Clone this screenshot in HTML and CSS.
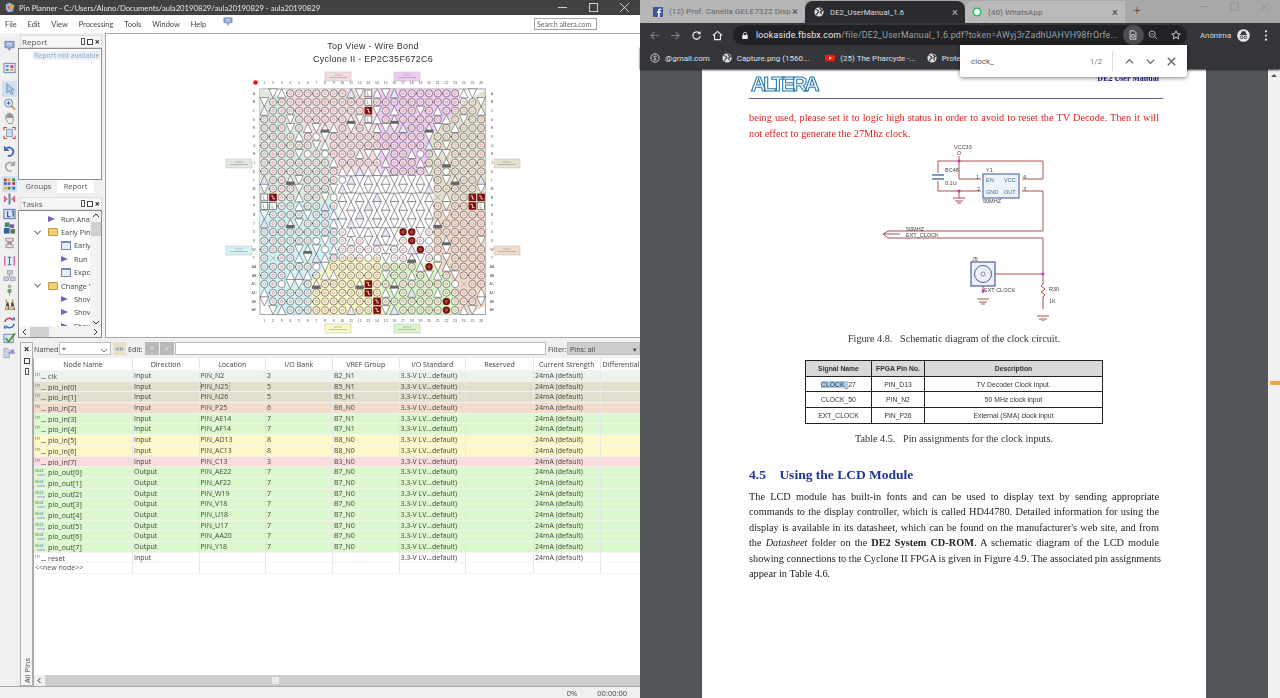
FILE: index.html
```html
<!DOCTYPE html>
<html lang="pt">
<head>
<meta charset="utf-8">
<title>Pin Planner</title>
<link rel="stylesheet" href="styles.css">
</head>
<body>
<div class="app">
  <header class="titlebar">
    <svg class="tb-logo" viewBox="0 0 14 14"><path d="M1 3l5-2 6 3-2 8-6 1-3-4z" fill="#9fb6dd"/><path d="M6 3l5 2-2 5-4-1z" fill="#d9a93b"/><path d="M3 5l3 1-1 4z" fill="#c44"/></svg>
    <span class="tb-text">Pin Planner - C:/Users/Aluno/Documents/aula20190829/aula20190829 - aula20190829</span>
    <div class="win-btns">
      <svg viewBox="0 0 10 10"><path d="M0 5h10" stroke="#ddd"/></svg>
      <svg viewBox="0 0 10 10"><rect x=".5" y=".5" width="9" height="9" fill="none" stroke="#ddd"/></svg>
      <svg viewBox="0 0 10 10"><path d="M0 0l10 10M10 0L0 10" stroke="#ddd"/></svg>
    </div>
  </header>
  <nav class="menubar">
    <span>File</span><span>Edit</span><span>View</span><span>Processing</span><span>Tools</span><span>Window</span><span>Help</span>
    <svg class="menu-ic" viewBox="0 0 12 12"><path d="M1 1h10v6H7l-1 3-2-3H1z" fill="#8ba4d0" stroke="#5f7aa8" stroke-width=".6"/><path d="M3 3h6M3 5h6" stroke="#fff" stroke-width=".7"/></svg>
    <div class="search">Search altera.com</div>
  </nav>
  <div class="main">
    <aside class="rail">
      <div class="rgroup rg-first"><svg viewBox="0 0 14 14"><path d="M2 2h10v7H8l-1 3-2-3H2z" fill="#8ba4d0" stroke="#5f7aa8" stroke-width=".7"/><path d="M4 4h6M4 6h6" stroke="#fff" stroke-width=".8"/></svg></div>
      <div class="rgroup rg-wide"><svg viewBox="0 0 14 14"><rect x="1" y="2" width="12" height="10" fill="#dbe6f5" stroke="#6d86b3"/><rect x="3" y="4" width="3" height="2" fill="#5b7fc2"/><rect x="8" y="4" width="3" height="3" fill="#d13a7a"/><rect x="3" y="8" width="3" height="2" fill="#5aa05a"/><rect x="8" y="8" width="3" height="2" fill="#e0a030"/></svg></div>
      <div class="rgroup rg-after">
        <svg class="sel" viewBox="0 0 14 14"><path d="M4 1v10l3-2 2 4 2-1-2-4h3z" fill="#b9c9e6" stroke="#6a7da6" stroke-width=".8"/></svg>
        <svg viewBox="0 0 14 14"><circle cx="6" cy="6" r="4.300" fill="#dfe9f7" stroke="#6b84ad"/><path d="M4 6h4M6 4v4" stroke="#3b5c9b"/><path d="M9 9l4 4" stroke="#b8922f" stroke-width="1.600"/></svg>
        <svg viewBox="0 0 14 14"><path d="M3 8V4h1v3M5 7V2h1v5M7 7V2h1v5M9 7V3h1v4M3 8l3 5h4l1-3V5h-1" fill="#eee" stroke="#777" stroke-width=".8"/></svg>
        <svg viewBox="0 0 14 14"><path d="M1 4V1h3M10 1h3v3M13 10v3h-3M4 13H1v-3" fill="none" stroke="#d43a2a" stroke-width="1.100"/><rect x="4" y="3" width="6" height="8" fill="#cfdcef" stroke="#6b84ad" stroke-width=".8"/></svg>
      </div>
      <div class="rgroup rg-mid">
        <svg viewBox="0 0 14 14"><path d="M3 5a4.500 4.500 0 1 1 2 7" fill="none" stroke="#3f6db5" stroke-width="2"/><path d="M1 1v6h6z" fill="#3f6db5"/></svg>
        <svg viewBox="0 0 14 14"><path d="M11 5a4.500 4.500 0 1 0-2 7" fill="none" stroke="#a9a9a9" stroke-width="1.800"/><path d="M13 1v6H7z" fill="#a9a9a9"/></svg>
      </div>
      <div class="rgroup rg-mid">
        <svg class="sel" viewBox="0 0 14 14"><rect x="1" y="1" width="3" height="3" fill="#d13a3a"/><rect x="5" y="1" width="3" height="3" fill="#e7b02c"/><rect x="10" y="1" width="3" height="3" fill="#3f8f3f"/><rect x="1" y="5" width="3" height="3" fill="#3f6db5"/><rect x="5" y="5" width="3" height="3" fill="#9a4db5"/><rect x="10" y="5" width="3" height="3" fill="#d13a3a"/><rect x="1" y="10" width="3" height="3" fill="#e7b02c"/><rect x="5" y="10" width="3" height="3" fill="#3f8f3f"/><rect x="10" y="10" width="3" height="3" fill="#3f6db5"/></svg>
        <svg viewBox="0 0 14 14"><path d="M1 3l4 4-4 4zM13 3L9 7l4 4z" fill="#c9559f"/><path d="M6 1h2v12H6z" fill="#4b7bc4"/><path d="M1 7h12" stroke="#e7b02c"/></svg>
        <svg viewBox="0 0 14 14"><rect x="1" y="2" width="12" height="10" fill="#d7e3f3" stroke="#4f6da3"/><path d="M5 4v6h3M9 4h2v6" fill="none" stroke="#2d4f8f" stroke-width="1.200"/></svg>
        <svg viewBox="0 0 14 14"><rect x="2" y="1" width="5" height="5" fill="#3f8f6f"/><rect x="7" y="3" width="5" height="4" fill="#7f5fa8"/><rect x="1" y="7" width="6" height="6" fill="#2f5f9f"/><rect x="8" y="8" width="5" height="5" fill="#4f7f4f"/></svg>
        <svg viewBox="0 0 14 14"><path d="M3 2h8v3H8v4h3v3H3V9h3V5H3z" fill="#e8e8e8" stroke="#777" stroke-width=".8"/><path d="M4 7h6" stroke="#c33"/></svg>
      </div>
      <div class="rgroup rg-mid">
        <svg viewBox="0 0 14 14"><path d="M2 2v10M12 2v10" stroke="#d43a9a" stroke-width="1.200"/><path d="M5 3h4M7 3v8M5 11h4" stroke="#3f6db5" stroke-width="1.200"/></svg>
        <svg viewBox="0 0 14 14"><rect x="5" y="1" width="5" height="4" fill="#c5ccd6" stroke="#8994a3" stroke-width=".7"/><rect x="1" y="8" width="5" height="4" fill="#c5ccd6" stroke="#8994a3" stroke-width=".7"/><rect x="8" y="8" width="5" height="4" fill="#c5ccd6" stroke="#8994a3" stroke-width=".7"/><path d="M7 5v3" stroke="#8994a3"/></svg>
        <svg viewBox="0 0 14 14"><circle cx="7" cy="3" r="2" fill="#9fb49f"/><circle cx="7" cy="8" r="2.400" fill="#6fa86f"/><path d="M7 10v3" stroke="#8a8a8a"/></svg>
        <svg viewBox="0 0 14 14"><path d="M2 12l2-8h2l1 8zM8 12l1-8h2l2 8z" fill="#4d4d4d"/><path d="M3 4l1-3M11 4l-1-3" stroke="#c69a3a" stroke-width="1.500"/><circle cx="4" cy="10" r="2" fill="#e6c36a"/><circle cx="10" cy="10" r="2" fill="#e6c36a"/></svg>
      </div>
      <div class="rgroup rg-mid">
        <svg viewBox="0 0 14 14"><path d="M2 6a5 5 0 0 1 9-2" fill="none" stroke="#d43a3a" stroke-width="1.600"/><path d="M12 8a5 5 0 0 1-9 2" fill="none" stroke="#3f6db5" stroke-width="1.600"/><path d="M10 1h3v4zM4 13H1V9z" fill="#3f6db5"/></svg>
        <svg viewBox="0 0 14 14"><rect x="1" y="3" width="10" height="9" fill="#d7e3f3" stroke="#6b84ad"/><path d="M3 7l3 4 7-9" fill="none" stroke="#3f9a3f" stroke-width="2"/></svg>
        <svg viewBox="0 0 14 14"><path d="M1 2h4l2 2v8H1z" fill="#c8d3e4" stroke="#7c8dab" stroke-width=".6"/><path d="M6 7h7" stroke="#6c5fae"/><circle cx="10" cy="5" r="2" fill="#a38ad0"/></svg>
      </div>
    </aside>
    <div class="workspace">
      <div class="upper">
        <div class="side">
          <div class="dock-head"><span>Report</span><span class="dock-ic"><i class="pin"></i><i class="float"></i><b>×</b></span></div>
          <div class="report-body"><div class="na">Report not available</div></div>
          <div class="tabs"><span class="tab">Groups</span><span class="tab tab-on">Report</span></div>
          <div class="dock-head dock-tasks"><span>Tasks</span><span class="dock-ic"><i class="pin"></i><i class="float"></i><b>×</b></span></div>
          <div class="tree">
            <div class="tree-in">
              <div class="tree-rows">
                <div class="tn l2"><i class="play"></i><span>Run Anal</span></div>
                <div class="tn l1"><i class="chev"></i><i class="folder"></i><span>Early Pin</span></div>
                <div class="tn l3"><i class="winic"></i><span>Early</span></div>
                <div class="tn l3"><i class="play"></i><span>Run :</span></div>
                <div class="tn l3"><i class="winic"></i><span>Expo</span></div>
                <div class="tn l1"><i class="chev"></i><i class="folder"></i><span>Change V</span></div>
                <div class="tn l3"><i class="play"></i><span>Show</span></div>
                <div class="tn l3"><i class="play"></i><span>Show</span></div>
                <div class="tn l3"><i class="play"></i><span>Show</span></div>
              </div>
              <div class="vscroll"><svg viewBox="0 0 8 8"><path d="M1 5l3-3 3 3" fill="none" stroke="#333"/></svg><i class="thumb"></i><svg class="arrow-d" viewBox="0 0 8 8"><path d="M1 3l3 3 3-3" fill="none" stroke="#333"/></svg></div>
            </div>
            <div class="hscroll"><svg viewBox="0 0 8 8"><path d="M5 1L2 4l3 3" fill="none" stroke="#333"/></svg><i></i><svg viewBox="0 0 8 8"><path d="M3 1l3 3-3 3" fill="none" stroke="#333"/></svg></div>
          </div>
        </div>
        <section class="canvas">
          <div class="cv-title">Top View - Wire Bond</div>
          <div class="cv-title">Cyclone II - EP2C35F672C6</div>
          <div id="pins" class="pins"></div>
        </section>
      </div>
      <div class="lower">
        <div class="dock-strip">
          <div class="strip-ic"><b>×</b><i class="float"></i><i class="pin"></i></div>
          <div class="allpins">All Pins</div>
        </div>
        <div class="lower-main">
          <div class="lower-tools">
            <span class="lbl lbl-named">Named:</span><div class="combo">*<svg viewBox="0 0 8 8"><path d="M1 3l3 3 3-3" fill="none" stroke="#777"/></svg></div>
            <div class="tbtn tbtn-assign">«»</div>
            <span class="lbl lbl-edit">Edit:</span>
            <div class="tbtn tbtn-off">×</div><div class="tbtn tbtn-off tbtn-2">✓</div>
            <div class="edit-input"></div>
            <span class="lbl lbl-filter">Filter:</span><div class="filter">Pins: all<span>▾</span></div>
          </div>
          <div class="grid">
            <div class="row head"><div class="c-name">Node Name</div><div>Direction</div><div>Location</div><div>I/O Bank</div><div>VREF Group</div><div>I/O Standard</div><div>Reserved</div><div>Current Strength</div><div>Differential</div></div>
            <div class="row b2"><div class="n"><i class="in">in</i>clk</div><div>Input</div><div>PIN_N2</div><div>2</div><div>B2_N1</div><div>3.3-V LV...default)</div><div></div><div>24mA (default)</div><div></div></div>
            <div class="row b5"><div class="n"><i class="in">in</i>pio_in[0]</div><div>Input</div><div><span class="focus">PIN_N25</span></div><div>5</div><div>B5_N1</div><div>3.3-V LV...default)</div><div></div><div>24mA (default)</div><div></div></div>
            <div class="row b5"><div class="n"><i class="in">in</i>pio_in[1]</div><div>Input</div><div>PIN_N26</div><div>5</div><div>B5_N1</div><div>3.3-V LV...default)</div><div></div><div>24mA (default)</div><div></div></div>
            <div class="row b6"><div class="n"><i class="in">in</i>pio_in[2]</div><div>Input</div><div>PIN_P25</div><div>6</div><div>B6_N0</div><div>3.3-V LV...default)</div><div></div><div>24mA (default)</div><div></div></div>
            <div class="row b7"><div class="n"><i class="in">in</i>pio_in[3]</div><div>Input</div><div>PIN_AE14</div><div>7</div><div>B7_N1</div><div>3.3-V LV...default)</div><div></div><div>24mA (default)</div><div></div></div>
            <div class="row b7"><div class="n"><i class="in">in</i>pio_in[4]</div><div>Input</div><div>PIN_AF14</div><div>7</div><div>B7_N1</div><div>3.3-V LV...default)</div><div></div><div>24mA (default)</div><div></div></div>
            <div class="row b8"><div class="n"><i class="in">in</i>pio_in[5]</div><div>Input</div><div>PIN_AD13</div><div>8</div><div>B8_N0</div><div>3.3-V LV...default)</div><div></div><div>24mA (default)</div><div></div></div>
            <div class="row b8"><div class="n"><i class="in">in</i>pio_in[6]</div><div>Input</div><div>PIN_AC13</div><div>8</div><div>B8_N0</div><div>3.3-V LV...default)</div><div></div><div>24mA (default)</div><div></div></div>
            <div class="row b3"><div class="n"><i class="in">in</i>pio_in[7]</div><div>Input</div><div>PIN_C13</div><div>3</div><div>B3_N0</div><div>3.3-V LV...default)</div><div></div><div>24mA (default)</div><div></div></div>
            <div class="row b7"><div class="n"><i class="out">out</i>pio_out[0]</div><div>Output</div><div>PIN_AE22</div><div>7</div><div>B7_N0</div><div>3.3-V LV...default)</div><div></div><div>24mA (default)</div><div></div></div>
            <div class="row b7"><div class="n"><i class="out">out</i>pio_out[1]</div><div>Output</div><div>PIN_AF22</div><div>7</div><div>B7_N0</div><div>3.3-V LV...default)</div><div></div><div>24mA (default)</div><div></div></div>
            <div class="row b7"><div class="n"><i class="out">out</i>pio_out[2]</div><div>Output</div><div>PIN_W19</div><div>7</div><div>B7_N0</div><div>3.3-V LV...default)</div><div></div><div>24mA (default)</div><div></div></div>
            <div class="row b7"><div class="n"><i class="out">out</i>pio_out[3]</div><div>Output</div><div>PIN_V18</div><div>7</div><div>B7_N0</div><div>3.3-V LV...default)</div><div></div><div>24mA (default)</div><div></div></div>
            <div class="row b7"><div class="n"><i class="out">out</i>pio_out[4]</div><div>Output</div><div>PIN_U18</div><div>7</div><div>B7_N0</div><div>3.3-V LV...default)</div><div></div><div>24mA (default)</div><div></div></div>
            <div class="row b7"><div class="n"><i class="out">out</i>pio_out[5]</div><div>Output</div><div>PIN_U17</div><div>7</div><div>B7_N0</div><div>3.3-V LV...default)</div><div></div><div>24mA (default)</div><div></div></div>
            <div class="row b7"><div class="n"><i class="out">out</i>pio_out[6]</div><div>Output</div><div>PIN_AA20</div><div>7</div><div>B7_N0</div><div>3.3-V LV...default)</div><div></div><div>24mA (default)</div><div></div></div>
            <div class="row b7"><div class="n"><i class="out">out</i>pio_out[7]</div><div>Output</div><div>PIN_Y18</div><div>7</div><div>B7_N0</div><div>3.3-V LV...default)</div><div></div><div>24mA (default)</div><div></div></div>
            <div class="row"><div class="n"><i class="in">in</i>reset</div><div>Input</div><div></div><div></div><div></div><div>3.3-V LV...default)</div><div></div><div>24mA (default)</div><div></div></div>
            <div class="row"><div class="newnode">&lt;&lt;new node&gt;&gt;</div><div></div><div></div><div></div><div></div><div></div><div></div><div></div><div></div></div>
            <div class="grid-fill"></div>
            <div class="grid-hscroll"><svg viewBox="0 0 11 11"><path d="M6.500 3L4 5.500 6.500 8" fill="none" stroke="#333"/></svg><div class="gh-track"><i></i></div></div>
          </div>
        </div>
      </div>
    </div>
  </div>
  <footer class="status"><span class="st-pct">0%</span><span class="st-time">00:00:00</span></footer>
</div>

<div class="browser">
  <div class="tabstrip">
    <div class="btab btab-fb"><svg class="fav" viewBox="0 0 12 12"><rect width="12" height="12" rx="1" fill="#3b5998"/><path d="M8 12V7.300h1.500l.2-1.800H8V4.400c0-.5.200-.9.900-.9h.9V1.900H8.500C7 1.900 6.100 2.800 6.100 4.200v1.300H4.600v1.800h1.500V12z" fill="#fff"/></svg><span class="bt-label">(12) Prof. Canella GELE7322 Disp</span><span class="bt-x">×</span></div>
    <div class="btab btab-on"><svg class="fav" viewBox="0 0 12 12"><circle cx="6" cy="6" r="5.500" fill="#dee1e6"/><path d="M2 3l3 1 1 2-2 1-1 3M7 1l1 2 2 1-2 2 1 3" fill="none" stroke="#2a2b2e" stroke-width="1.300"/></svg><span class="bt-label">DE2_UserManual_1.6</span><span class="bt-x">×</span></div>
    <div class="btab btab-wa"><svg class="fav" viewBox="0 0 12 12"><circle cx="6" cy="6" r="5.500" fill="#25c463"/><circle cx="6" cy="6" r="3.500" fill="#fff"/></svg><span class="bt-label">(40) WhatsApp</span><span class="bt-x">×</span></div>
    <span class="plus">+</span>
    <div class="bwin">
      <svg viewBox="0 0 10 10"><path d="M0 5h10" stroke="#8f8f8f"/></svg>
      <svg viewBox="0 0 10 10"><rect x="1" y="1" width="8" height="8" fill="none" stroke="#8f8f8f"/></svg>
      <svg viewBox="0 0 10 10"><path d="M1 1l8 8M9 1L1 9" stroke="#8f8f8f"/></svg>
    </div>
  </div>
  <div class="toolbar">
    <svg class="nav nav-first" viewBox="0 0 12 12"><path d="M11 6H2M6 2L2 6l4 4" fill="none" stroke="#7c7f84" stroke-width="1.200"/></svg>
    <svg class="nav" viewBox="0 0 12 12"><path d="M1 6h9M6 2l4 4-4 4" fill="none" stroke="#7c7f84" stroke-width="1.200"/></svg>
    <svg class="nav" viewBox="0 0 12 12"><path d="M10 6.500A4 4 0 1 1 9 3.300" fill="none" stroke="#e8eaed" stroke-width="1.300"/><path d="M10.500 1v3.500H7z" fill="#e8eaed"/></svg>
    <svg class="nav" viewBox="0 0 12 12"><path d="M1 6l5-4.500L11 6M2.800 5v5.500h6.400V5" fill="none" stroke="#e8eaed" stroke-width="1.200"/></svg>
    <div class="omni">
      <svg class="lock" viewBox="0 0 10 10"><rect x="1.500" y="4.500" width="7" height="5" rx=".6" fill="#e8eaed"/><path d="M3 4.500V3a2 2 0 0 1 4 0v1.500" fill="none" stroke="#e8eaed"/></svg>
      <span class="url"><b>lookaside.fbsbx.com</b>/file/DE2_UserManual_1.6.pdf?token=AWyj3rZadhUAHVH98frOrfe...</span>
      <span class="om-pdf"><svg viewBox="0 0 12 12"><path d="M2.500 1h5l2 2v8h-7z" fill="none" stroke="#e8eaed"/><circle cx="6" cy="7" r="1.800" fill="none" stroke="#e8eaed"/></svg></span>
      <svg class="om-zoom" viewBox="0 0 12 12"><circle cx="5" cy="5" r="3.700" fill="none" stroke="#c6c9cd"/><path d="M3.300 5h3.400M8 8l3 3" stroke="#c6c9cd"/></svg>
      <svg class="om-star" viewBox="0 0 12 12"><path d="M6 1l1.500 3.400 3.700.3-2.800 2.400.8 3.600L6 8.800l-3.200 1.900.8-3.600L.8 4.700l3.700-.3z" fill="none" stroke="#e8eaed"/></svg>
    </div>
    <span class="anon">Anônima</span>
    <svg class="incog" viewBox="0 0 14 14"><circle cx="7" cy="7" r="6.800" fill="#e8eaed"/><path d="M3 6h8M4.500 6l.8-3h3.400l.8 3" fill="#35363a" stroke="#35363a"/><circle cx="5" cy="9" r="1.500" fill="none" stroke="#35363a"/><circle cx="9" cy="9" r="1.500" fill="none" stroke="#35363a"/></svg>
    <svg class="dots" viewBox="0 0 4 14"><circle cx="2" cy="2.500" r="1.200" fill="#e8eaed"/><circle cx="2" cy="7" r="1.200" fill="#e8eaed"/><circle cx="2" cy="11.500" r="1.200" fill="#e8eaed"/></svg>
  </div>
  <div class="bookmarks">
    <span class="bm bm-s"><svg viewBox="0 0 12 12"><circle cx="6" cy="6" r="5" fill="none" stroke="#e8eaed"/><path d="M8 4.300C7 3.300 4.500 3.500 4.500 5c0 1.600 3 1 3 2.300 0 1.300-2.300 1.400-3.500.4" fill="none" stroke="#e8eaed"/></svg>@gmail.com</span>
    <span class="bm bm-c"><svg viewBox="0 0 12 12"><circle cx="6" cy="6" r="5.500" fill="#dee1e6"/><path d="M2 3l3 1 1 2-2 1-1 3M7 1l1 2 2 1-2 2 1 3" fill="none" stroke="#35363a" stroke-width="1.300"/></svg>Capture.png (1560...</span>
    <span class="bm bm-y"><svg viewBox="0 0 12 12"><rect y="2" width="12" height="8" rx="2" fill="#e62117"/><path d="M5 4l3 2-3 2z" fill="#fff"/></svg>(25) The Pharcyde -...</span>
    <span class="bm"><svg viewBox="0 0 12 12"><circle cx="6" cy="6" r="5.500" fill="#dee1e6"/><path d="M2 3l3 1 1 2-2 1-1 3M7 1l1 2 2 1-2 2 1 3" fill="none" stroke="#35363a" stroke-width="1.300"/></svg>Prote</span>
  </div>
  <div class="viewer">
    <article class="page">
      <div class="pg-head"><span class="altera">ALTERA</span><span class="pg-run">DE2 User Manual</span></div>
      <div class="red">
        <span class="just">being used, please set it to logic high status in order to avoid to reset the TV Decode. Then it will</span>
        <span>not effect to generate the 27Mhz clock.</span>
      </div>
      <svg class="schem" viewBox="0 0 220 190">
        <g fill="none" stroke="#a8524f" stroke-width="1">
          <path d="M99 25v5M78 30h105v18h-21M78 30v12M78 50v10h43M99 30v18h22M99 60v7M162 60h21v40H40M40 107h143v36"/>
          <path d="M40 100H28l-5 3 5 4h12M23 103h17M183 143h-54M183 143v10l-2 2 4 3-4 3 4 3-2 2v12M123 155v7"/>
          <path d="M93 67h12M95 70h8M97 72h4M117 168h12M119 171h8M121 173h4M177 185h12M179 188h8M181 190h4"/>
        </g>
        <path d="M72 44h12M72 48h12" stroke="#5577aa" stroke-width="1.300"/>
        <rect x="123" y="43" width="36" height="24" fill="#eef2fa" stroke="#5a6ea8" stroke-width="1.200"/>
        <rect x="111" y="131" width="24" height="24" fill="#eef0f8" stroke="#4d5f99" stroke-width="1.200"/>
        <circle cx="123" cy="143" r="8.500" fill="none" stroke="#4d5f99"/>
        <circle cx="123" cy="143" r="2" fill="#fff" stroke="#4d5f99" stroke-width=".7"/>
        <circle cx="99" cy="22" r="1.700" fill="#fff" stroke="#a8524f" stroke-width=".7"/>
        <g fill="#d030c0"><circle cx="99" cy="30" r="1.500"/><circle cx="99" cy="60" r="1.500"/><circle cx="183" cy="143" r="1.500"/><circle cx="123" cy="160" r="1.500"/></g>
        <g class="sch-t">
          <text x="94" y="18">VCC33</text>
          <text x="85" y="41">BC48</text><text x="85" y="54">0.1U</text>
          <text x="126" y="41">Y1</text><text x="116" y="48">1</text><text x="117" y="60">2</text><text x="163" y="48">4</text><text x="163" y="60">3</text>
          <text class="blue" x="126" y="51">EN</text><text class="blue" x="144" y="51">VCC</text><text class="blue" x="126" y="63">GND</text><text class="blue" x="144" y="63">OUT</text>
          <text x="123" y="72">50MHZ</text><text x="46" y="100">50MHZ</text><text x="46" y="106">EXT_CLOCK</text>
          <text x="112" y="130">J5</text><text x="124" y="161">EXT CLOCK</text><text x="189" y="160">R30</text><text x="189" y="172">1K</text>
        </g>
      </svg>
      <div class="caption cap-fig">Figure 4.8.&nbsp;&nbsp; Schematic diagram of the clock circuit.</div>
      <div class="pdf-table">
        <div class="tr th"><div>Signal Name</div><div>FPGA Pin No.</div><div>Description</div></div>
        <div class="tr"><div><mark>CLOCK_</mark>27</div><div>PIN_D13</div><div>TV Decoder Clock Input.</div></div>
        <div class="tr"><div>CLOCK_50</div><div>PIN_N2</div><div>50 MHz clock input</div></div>
        <div class="tr"><div>EXT_CLOCK</div><div>PIN_P26</div><div>External (SMA) clock input</div></div>
      </div>
      <div class="caption cap-tab">Table 4.5.&nbsp;&nbsp; Pin assignments for the clock inputs.</div>
      <h2>4.5&nbsp;&nbsp;&nbsp; Using the LCD Module</h2>
      <div class="para">
        <span class="just">The LCD module has built-in fonts and can be used to display text by sending appropriate</span>
        <span class="just">commands to the display controller, which is called HD44780. Detailed information for using the</span>
        <span class="just">display is available in its datasheet, which can be found on the manufacturer's web site, and from</span>
        <span class="just">the <em>Datasheet</em> folder on the <b>DE2 System CD-ROM</b>. A schematic diagram of the LCD module</span>
        <span class="just">showing connections to the Cyclone II FPGA is given in Figure 4.9. The associated pin assignments</span>
        <span>appear in Table 4.6.</span>
      </div>
    </article>
    <div class="pdf-scroll"><span class="up"></span><i class="tick"></i></div>
  </div>
  <div class="findbar">
    <span class="f-q">clock_</span><span class="f-n">1/2</span><i class="f-sep"></i>
    <svg viewBox="0 0 12 12"><path d="M2 8l4-4 4 4" fill="none" stroke="#5f6368" stroke-width="1.400"/></svg>
    <svg viewBox="0 0 12 12"><path d="M2 4l4 4 4-4" fill="none" stroke="#5f6368" stroke-width="1.400"/></svg>
    <svg viewBox="0 0 12 12"><path d="M2 2l8 8M10 2l-8 8" fill="none" stroke="#5f6368" stroke-width="1.500"/></svg>
  </div>
</div>
<script src="script.js"></script>
</body>
</html>
```
FILE: styles.css
```css
* { box-sizing: border-box; }
html, body { margin: 0; height: 100%; }
body {
  width: 1280px; height: 698px; overflow: hidden; display: flex;
  font-family: "Open Sans", "Liberation Sans", sans-serif; font-size: 8px; color: #333;
  background: #f0f0f0;
}
svg { display: block; flex: none; }
i { display: block; font-style: normal; }

/* Quartus window */
.app { width: 640px; height: 698px; display: flex; flex-direction: column; background: #f0f0f0; filter: blur(.25px); }
.titlebar { height: 15px; background: #414141; color: #e6e6e6; display: flex; align-items: center; padding-left: 5px; font: 7.700px "Lato", sans-serif; }
.tb-logo { width: 11px; height: 11px; margin-right: 3px; }
.tb-text { flex: 1; white-space: nowrap; }
.win-btns { display: flex; gap: 22px; padding-right: 11px; }
.win-btns svg { width: 9px; height: 9px; }
.menubar { height: 18px; background: #fff; display: flex; align-items: center; padding-left: 5px; color: #444; font: 7.400px "Lato", sans-serif; }
.menubar > span { margin-right: 11px; }
.menu-ic { width: 10px; height: 10px; margin: -4px 0 0 6px; }
.search { margin-left: auto; margin-right: 43px; width: 63px; height: 12px; border: 1px solid #a5a5a5; background: #fff; color: #666; font-size: 7px; line-height: 10px; padding-left: 2px; white-space: nowrap; }
.main { flex: 1; display: flex; min-height: 0; }

.rail { width: 18px; flex: none; display: flex; flex-direction: column; align-items: center; padding-top: 6px; background: #f0f0f0; }
.rgroup { display: flex; flex-direction: column; align-items: center; gap: .7px; }
.rgroup svg { width: 13px; height: 14px; }
.rg-wide { margin-top: 8px; }
.rg-after { margin-top: 7px; }
.rg-mid { margin-top: 4.200px; }
.rgroup svg.sel { background: #cfe0f3; box-shadow: 0 0 0 1px #cfe0f3; }

.workspace { flex: 1; display: flex; flex-direction: column; min-width: 0; }
.upper { height: 305px; display: flex; gap: 3px; flex: none; }
.side { width: 84px; flex: none; display: flex; flex-direction: column; }
.dock-head { height: 13px; margin: 2px 0 0 2px; padding: 0 1px; display: flex; justify-content: space-between; align-items: center; background: #f7f7f7; border: 1px solid #dcdcdc; color: #555; font-size: 8px; }
.dock-ic { display: flex; gap: 2px; align-items: center; }
.dock-ic b { font-size: 9px; line-height: 8px; color: #222; }
.pin { width: 4px; height: 7px; border: 1px solid #555; background: #fff; }
.float { width: 6px; height: 6px; border: 1.500px solid #444; background: #fff; }
.report-body { height: 132px; border: 1px solid #8d8d8d; background: #fff; padding: 2px 1px 0 14px; }
.na { background: #e8f1fa; color: #93a4b8; font-size: 7px; line-height: 9px; white-space: nowrap; padding-left: 1px; }
.tabs { display: flex; height: 13px; padding-left: 2px; }
.tab { width: 37px; text-align: center; line-height: 12px; color: #555; font-size: 7.500px; }
.tab-on { background: #fff; }
.dock-tasks { margin-top: 4px; }
.tree { height: 128px; border: 1px solid #8d8d8d; background: #fff; display: flex; flex-direction: column; }
.tree-in { flex: 1; display: flex; min-height: 0; overflow: hidden; }
.tree-rows { flex: 1; overflow: hidden; margin-top: 1px; min-width: 0; }
.tn { height: 13.400px; display: flex; align-items: center; white-space: nowrap; color: #444; font-size: 7.400px; gap: 2px; overflow: hidden; }
.tn span { overflow: hidden; }
.l1 { padding-left: 16px; }
.l2 { padding-left: 29px; }
.l3 { padding-left: 42px; gap: 2px; }
.play { width: 0; height: 0; border-left: 7px solid #7a5fc0; border-top: 3.500px solid transparent; border-bottom: 3.500px solid transparent; margin-right: 4px; flex: none; }
.chev { width: 5px; height: 5px; border-right: 1px solid #555; border-bottom: 1px solid #555; transform: rotate(45deg) translate(-1px,-1px); margin-right: 6px; flex: none; }
.folder { width: 10px; height: 8px; background: #f2cf72; border: 1px solid #bd9a3f; border-radius: 1px; margin-right: 1px; flex: none; }
.winic { width: 10px; height: 9px; border: 1px solid #7289ba; border-top-width: 2px; background: #e8eef8; flex: none; margin-right: 1px; }
.vscroll { width: 11px; background: #f3f3f3; display: flex; flex-direction: column; align-items: center; flex: none; padding-top: 1px; }
.vscroll svg, .hscroll svg { width: 8px; height: 8px; }
.thumb { width: 10px; height: 14px; background: #d0d0d0; margin-top: 2px; }
.arrow-d { margin-top: auto; }
.hscroll { height: 11px; background: #f3f3f3; display: flex; align-items: center; padding: 0 2px; flex: none; }
.hscroll i { width: 19px; height: 10px; background: #d0d0d0; margin: 0 auto 0 1px; }

.canvas { flex: 1; background: #fff; border-top: 1px solid #a6a6a6; border-left: 1px solid #a6a6a6; border-bottom: 1px solid #a6a6a6; display: flex; flex-direction: column; align-items: center; padding-top: 6px; min-width: 0; color: #333; }
.cv-title { font-size: 9px; line-height: 13px; letter-spacing: .25px; font-family: "Liberation Sans", sans-serif; }
.pins { width: 300px; height: 265px; margin-top: 4px; flex: none; }
.pins svg { width: 300px; height: 265px; }
.pin-lbl { font: 3.500px "Liberation Sans", sans-serif; fill: #555; text-anchor: middle; }

.lower { flex: 1; display: flex; min-height: 0; margin-top: 4px; }
.dock-strip { width: 13px; margin-left: 2px; flex: none; border: 1px solid #b0b0b0; display: flex; flex-direction: column; justify-content: space-between; align-items: center; background: #f5f5f5; }
.strip-ic { display: flex; flex-direction: column; align-items: center; gap: 4.500px; margin-top: 2px; }
.strip-ic b { font-size: 10px; line-height: 8px; color: #222; }
.allpins { writing-mode: vertical-rl; transform: rotate(180deg); font-size: 7.500px; line-height: 10px; padding-top: 2px; color: #444; white-space: nowrap; }
.lower-main { flex: 1; min-width: 0; display: flex; flex-direction: column; }
.lower-tools { height: 13px; display: flex; align-items: center; flex: none; font-size: 7.200px; color: #444; white-space: nowrap; }
.lbl { flex: none; }
.lbl-named { width: 26px; padding-left: 1px; }
.lbl-edit { width: 19px; padding-left: 2px; }
.lbl-filter { width: 21px; padding-left: 2px; }
.combo { width: 52px; height: 13px; border: 1px solid #c0c0c0; background: #fff; display: flex; justify-content: space-between; align-items: flex-start; padding: 0 2px; line-height: 12px; flex: none; }
.combo svg { width: 8px; height: 8px; margin-top: 3px; }
.tbtn { width: 14px; height: 13px; text-align: center; line-height: 12px; font-size: 8px; flex: none; }
.tbtn-assign { width: 13px; background: #e6e0c4; color: #4a6fa8; margin-left: 2px; }
.tbtn-off { background: #b9b9b9; color: #eee; }
.tbtn-2 { margin-left: 1px; }
.edit-input { flex: 1; height: 13px; border: 1px solid #bdbdbd; background: #fff; margin-left: 1px; }
.filter { width: 73px; height: 13px; background: #cdcdcd; display: flex; justify-content: space-between; padding: 0 2px; line-height: 12px; border: 1px solid #bdbdbd; flex: none; }
.grid { flex: 1; display: flex; flex-direction: column; min-height: 0; min-width: 0; margin-top: 3px; background: #fff; border-left: 1px solid #a5a5a5; overflow: hidden; }
.row { display: grid; grid-template-columns: 99px 66.500px 66.500px 67px 66.500px 66.500px 68px 66.500px 60px; height: 10.700px; line-height: 10.500px; flex: none; border-bottom: 1px solid #f2f2f2; white-space: nowrap; font-size: 7px; color: #444; }
.row > div { padding-left: 1px; border-right: 1px solid #e6e6e6; overflow: hidden; }
.head { height: 13px; line-height: 13px; font-size: 7.100px; }
.head > div { text-align: center; padding-left: 0; }
.head > div:last-child { text-align: left; padding-left: 2px; }
.b2 { background: #ecf2ec; }
.b5 { background: #e2e0cc; }
.b6 { background: #f4dccc; }
.b7 { background: #dcf9cd; }
.b8 { background: #fcf8c7; }
.b3 { background: #fbdcdc; }
.row > .n { display: flex; padding-left: 1px; font-size: 7.200px; }
.in, .out { width: 13px; font-size: 5.500px; line-height: 6px; color: #5a78a8; flex: none; position: relative; }
.in::after, .out::after { content: ""; position: absolute; left: 6px; top: 7px; width: 5px; height: 1px; background: #999; }
.out::after { left: 2px; width: 8px; height: 2px; background: #c2c8cf; }
.focus { outline: 1px dashed #aaa; padding-right: 1px; }
.newnode { padding-left: 1px; color: #555; }
.grid-fill { flex: 1; }
.grid-hscroll { height: 11px; display: flex; align-items: center; background: #cdcdcd; flex: none; }
.grid-hscroll svg { width: 11px; height: 11px; background: #f0f0f0; }
.gh-track { flex: 1; display: flex; padding-left: 227px; }
.gh-track i { width: 7px; height: 7px; background: #eaeaea; }
.status { height: 12px; border-top: 1px solid #a8a8a8; flex: none; display: flex; justify-content: flex-end; align-items: center; padding-right: 13px; font-size: 7.500px; color: #444; background: #f0f0f0; }
.st-pct { margin-right: 20px; }

/* Browser */
.browser { width: 640px; height: 698px; display: flex; flex-direction: column; background: #35363a; position: relative; }
.tabstrip { height: 23px; background: #a8a8a8; display: flex; align-items: stretch; flex: none; }
.btab { display: flex; align-items: center; color: #5f6368; font-size: 8px; padding: 0 7px 0 13px; flex: none; font-family: "Roboto", sans-serif; letter-spacing: .1px; }
.btab-fb { width: 165px; background: #b6b6b6; border-radius: 0 0 6px 0; }
.btab-on { width: 160px; background: #2a2b2f; color: #dadce0; border-radius: 8px 8px 0 0; margin-top: 1px; padding-left: 9px; font-size: 7.700px; }
.btab-wa { width: 160px; background: #bababa; border-radius: 8px 0 0 0; margin-top: 1px; padding-left: 7px; }
.fav { width: 10px; height: 10px; margin-right: 6px; }
.bt-label { flex: 1; white-space: nowrap; overflow: hidden; }
.bt-x { font-size: 11px; color: #44474b; }
.btab-on .bt-x { color: #b0b3b8; }
.plus { color: #222; font-size: 14px; font-weight: 300; line-height: 22px; margin-left: 8px; }
.bwin { display: flex; gap: 21px; margin-left: auto; padding: 1px 11px 0 0; }
.bwin svg { width: 9px; height: 9px; margin-top: 1px; }
.toolbar { height: 24px; background: #35363a; display: flex; align-items: center; flex: none; }
.nav { width: 11px; height: 11px; margin-right: 10px; }
.nav-first { margin-left: 9px; }
.omni { width: 454px; height: 20px; border-radius: 10px; background: #202124; display: flex; align-items: center; padding-left: 8px; color: #9aa0a6; font-size: 8.800px; font-family: "Roboto", sans-serif; letter-spacing: .2px; white-space: nowrap; flex: none; }
.lock { width: 8px; height: 9px; margin-right: 7px; }
.url { flex: 1; overflow: hidden; }
.url b { color: #e8eaed; font-weight: 400; }
.om-pdf { width: 21px; height: 20px; background: #4d4e52; border-radius: 10px; display: flex; align-items: center; justify-content: center; margin-right: 4.500px; flex: none; }
.om-pdf svg { width: 10px; height: 10px; }
.om-zoom { width: 10px; height: 10px; margin-right: 13px; }
.om-star { width: 10px; height: 10px; margin-right: 6px; }
.anon { color: #d6d8db; font-size: 7.800px; margin-left: 13px; font-family: "Roboto", sans-serif; }
.incog { width: 13px; height: 13px; margin-left: 6px; }
.dots { width: 4px; height: 13px; margin-left: 14px; }
.bookmarks { height: 22px; display: flex; align-items: center; padding-left: 10px; color: #dfe1e5; font-size: 8px; flex: none; background: #35363a; font-family: "Roboto", sans-serif; box-shadow: 0 1px 2px #222; position: relative; z-index: 1; white-space: nowrap; }
.bm { display: flex; align-items: center; gap: 5px; }
.bm svg { width: 10px; height: 10px; }
.bm-s { margin-right: 12px; }
.bm-c { margin-right: 16px; }
.bm-y { margin-right: 11px; }
.viewer { flex: 1; display: flex; background: #525659; min-height: 0; justify-content: flex-end; position: relative; overflow: hidden; }
.findbar { position: absolute; top: 45px; right: 93px; width: 227px; height: 32px; background: #fff; z-index: 3; box-shadow: 0 1px 4px rgba(0,0,0,.5); border-radius: 0 0 3px 3px; display: flex; align-items: center; font-family: "Roboto", sans-serif; font-size: 8px; color: #555; padding: 0 5px 0 11px; }
.f-q { flex: 1; }
.f-n { color: #777; margin-right: 10px; }
.f-sep { width: 1px; height: 20px; background: #dadce0; margin-right: 6px; }
.findbar svg { width: 11px; height: 11px; margin: 0 5px; }
.page { width: 504px; margin-right: 74px; background: #fff; flex: none; padding: 6px 47px 0; font-family: "Liberation Serif", serif; color: #222; font-size: 10.300px; overflow: hidden; filter: blur(.25px); }
.pg-head { height: 24px; border-bottom: 1px solid #6a5f9a; display: flex; justify-content: space-between; padding: 0 0 5px 2px; margin-right: -4px; }
.altera { font: 700 21px/18px "Liberation Sans", sans-serif; letter-spacing: -3px; color: #fff; -webkit-text-stroke: 1.100px #2a7ab0; }
.pg-run { color: #1f1f8f; font-weight: 700; font-size: 8px; margin-right: 4px; margin-top: -1px; }
.red { color: #e0201c; margin-top: 11px; line-height: 16px; }
.just { display: block; text-align: justify; text-align-last: justify; white-space: nowrap; }
.red .just { white-space: normal; }
.schem { width: 220px; height: 190px; margin: -11px 0 0 111px; }
.sch-t text { font: 5.500px "Liberation Sans", sans-serif; fill: #444; }
.sch-t text.blue { fill: #4c6f86; }
.caption { text-align: center; font-size: 10.200px; line-height: 14px; color: #333; }
.cap-fig { margin-top: 11px; }
.pdf-table { width: 298px; margin: 14px 0 0 56px; border: 1px solid #222; font-family: "Liberation Sans", sans-serif; font-size: 6.800px; color: #333; }
.tr { display: grid; grid-template-columns: 66px 53px 1fr; height: 15.500px; border-bottom: 1px solid #222; text-align: center; line-height: 15.500px; }
.tr:last-child { border-bottom: 0; }
.tr > div { border-right: 1.500px solid #222; }
.tr > div:last-child { border-right: 0; }
.th { background: #d9d9d9; font-weight: 700; }
mark { background: #a9cbee; color: #333; }
.cap-tab { margin-top: 8px; }
h2 { font: 700 13.500px/16px "Liberation Serif", serif; color: #1d3595; margin: 21px 0 0; }
.para { margin-top: 6px; line-height: 15.400px; color: #222; }
.pdf-scroll { position: absolute; right: 0; top: 0; bottom: 0; width: 12px; background: #f1f1f1; }
.up { display: block; width: 0; height: 0; margin: 5px auto 0; border-left: 3px solid transparent; border-right: 3px solid transparent; border-bottom: 3px solid #555; }
.tick { height: 4px; background: #f2a43a; margin-top: 304px; margin-left: 2px; }
```
FILE: script.js
```js
// Draws the 26x26 FPGA pin map from compact row data.
var C = 8.67, OX = 37, OY = 19;
var rows = [
 ["A","_v^ooooooo^vS^v^ooooooo^v_"],
 ["B","vooooooooooo"+"S"+"oooooooooooo"+"v"],
 ["C","^ooooooooooo"+"Rvo^oovo^oooo^"],
 ["D","ooovoooooo"+"TvS^oToooo"+"o^ovoo"],
 ["E","ooovo^vT^ov"+"ov^vv^oo"+"Tvo^ooo"],
 ["F","oooo^ocvooooooooooovoooooo"],
 ["G","oooooov^oooooooooo"+"o^ovooooo"],
 ["H","oooovcocooo^vvvoo^cov"+"voooo"],
 ["J","oooooooo^ooooo^ooo^oo"+"Toooo"],
 ["K","ooooooooo^^^^^^oooovocoooo"],
 ["L","^ooTvoooo"+"c"+"^v^v^v^v^v"+"ov"+"T"+"oo^"],
 ["M","vooovooov"+"^v^v^v^v^v^"+"ooooov"],
 ["N","SRoo^oovc"+"^v^v^v^v^v^"+"x^ooRR"],
 ["P","SSoo^oo^o"+"v^v^v^v^v^v"+"ovooRS"],
 ["R","voooovoo^"+"^v^v^v^v^v^"+"ovoooo"],
 ["T","^ooTvooo^"+"v^v^v^v^v^v"+"Tooooo"],
 ["U","oooooooooo^v^v^vDDvooooooo"],
 ["V","oooooocvoo^ov^v^oDocoTooov"],
 ["W","oooovTvc^ooooovoo^Doovoooo"],
 ["Y","oxoo^v^^oooocovooTvocvoooo"],
 ["AA","oooooocvoooooooo"+"oo^Dv^oooo"],
 ["AB","ooo^^^o^^ooooovoo^ov"+"^ovooo"],
 ["AC","oocvvoTooooTRooTooooo"+"ocxoo"],
 ["AD","^oooooooooooRo^vo^oo^oooo^"],
 ["AE","v"+"oooooooooooo"+"R"+"ooooooo"+"D"+"ooo"+"v"],
 ["AF","_v^"+"ooooooo"+"^o"+"o"+"R"+"v^"+"ooooo"+"D"+"o"+"^v_"]
];
var banks = [
 ["#f3dede","3,0 13.5,0 13.5,8 14,10 8.5,10 8,6 5,6 5,4 3,2"],
 ["#efcaf1","13.5,0 23,0 23,3 20,5 19,10 14,10 13.5,6"],
 ["#e0e9df","0,0 3,1 5,4 5,6 8,6 8.5,10 9,13 4,13 0,13"],
 ["#e4e2ce","23,2 26,0 26,13 20,13 19,10 20,5"],
 ["#d3f2f6","0,13 8,13 11,17 11,19 8,20 6,22 6,26 2,26 0,24"],
 ["#f1dbcb","20,13 26,13 26,25 24,26 23,26 22,22 20,20 19,18 17,17"],
 ["#fbf9c4","11,19 14,19 14,26 6,26 6,22 8,20"],
 ["#daf5c8","14,20 18,20 20,20 22,22 23,26 14,26"]
];
var boxes = [
 [102,2,"#f3dede"],[171,2,"#efcaf1"],[3,89,"#e0e9df"],[271,89,"#e4e2ce"],
 [3,176,"#d3f2f6"],[271,176,"#f1dbcb"],[102,254,"#fbf9c4"],[171,254,"#daf5c8"]
];
function tri(x, y, up, fill, st) {
  var a = up ? y - 4.5 : y + 4.5, b = up ? y + 4.5 : y - 4.5;
  return '<path d="M' + x + ' ' + a + 'L' + (x - 4.3) + ' ' + b + 'H' + (x + 4.3) + 'Z" fill="' + fill + '" stroke="' + st + '" stroke-width=".6"/>';
}
function cell(t, x, y, c) {
  switch (t) {
    case "o":
      return '<circle cx="' + x + '" cy="' + y + '" r="3.600" fill="#fff" fill-opacity=".45" stroke="#444" stroke-width=".6"/><circle cx="' + x + '" cy="' + y + '" r="1.300" fill="none" stroke="#dc8d88" stroke-width=".7"/>' +
        (c % 3 === 0 ? '<circle cx="' + (x - 3.8) + '" cy="' + y + '" r=".6" fill="#333"/>' : '');
    case "c": return '<circle cx="' + x + '" cy="' + y + '" r="3.600" fill="#fff" stroke="#555" stroke-width=".6"/>';
    case "v": return tri(x, y, false, "#fff", "#555");
    case "^": return tri(x, y, true, c % 5 === 0 ? "#e6e6f6" : "#fff", "#556");
    case "T": return tri(x, y, true, "#fff", "#444") + '<rect x="' + (x - 4.2) + '" y="' + (y + 1.5) + '" width="8.400" height="3" fill="#666"/>';
    case "S": return '<rect x="' + (x - 3.4) + '" y="' + (y - 3.4) + '" width="6.800" height="6.800" fill="#fff" stroke="#555" stroke-width=".7"/><path d="M' + (x - 1) + ' ' + (y - 2) + 'v4h2" fill="none" stroke="#888" stroke-width=".6"/>';
    case "R": return '<rect x="' + (x - 3.8) + '" y="' + (y - 3.8) + '" width="7.600" height="7.600" fill="#7f1010"/><path d="M' + (x - 2) + ' ' + (y - 1.5) + 'h2v3h2" fill="none" stroke="#fff" stroke-width=".8"/>';
    case "D": return '<circle cx="' + x + '" cy="' + y + '" r="3.700" fill="#7f1010"/><circle cx="' + x + '" cy="' + y + '" r="1.200" fill="none" stroke="#d99" stroke-width=".6"/>';
    case "x": return '<path d="M' + (x - 3) + ' ' + (y - 3) + 'l6 6m0-6l-6 6" stroke="#999" stroke-width=".7"/>';
  }
  return "";
}
var s = '<svg viewBox="0 0 300 265">';
boxes.forEach(function (b) {
  s += '<rect x="' + b[0] + '" y="' + b[1] + '" width="26" height="9" fill="' + b[2] + '" stroke="#bbb" stroke-width=".5"/>' +
       '<path d="M' + (b[0] + 9) + ' ' + (b[1] + 3) + 'h8M' + (b[0] + 4) + ' ' + (b[1] + 5.5) + 'h18" stroke="#999" stroke-width=".6"/>';
});
s += '<g transform="translate(' + OX + ' ' + OY + ')">';
s += '<rect width="225.400" height="225.400" fill="#fff" stroke="#8b8b8b" stroke-width=".8"/>';
banks.forEach(function (b) {
  var pts = b[1].split(" ").map(function (p) { var q = p.split(","); return (q[0] * C) + "," + (q[1] * C); }).join(" ");
  s += '<polygon points="' + pts + '" fill="' + b[0] + '"/>';
});
s += '<rect x="' + (9 * C) + '" y="' + (10 * C) + '" width="' + (11 * C) + '" height="' + (9.4 * C) + '" fill="#fff"/>';
for (var n = 1; n <= 26; n++) {
  var cx = (n - 0.5) * C;
  s += '<text class="pin-lbl" x="' + cx + '" y="-5">' + n + '</text><text class="pin-lbl" x="' + cx + '" y="233">' + n + '</text>';
}
s += '<circle cx="-4.500" cy="-6.500" r="2.300" fill="#e8141c"/>';
rows.forEach(function (r, ri) {
  var y = (ri + 0.5) * C;
  s += '<text class="pin-lbl" x="-6" y="' + (y + 1.2) + '">' + r[0] + '</text><text class="pin-lbl" x="232" y="' + (y + 1.2) + '">' + r[0] + '</text>';
  for (var ci = 0; ci < 26; ci++) {
    var ch = r[1].charAt(ci) || "o";
    s += cell(ch, (ci + 0.5) * C, y, ci + ri);
  }
});
s += '</g></svg>';
document.getElementById("pins").innerHTML = s;
```
